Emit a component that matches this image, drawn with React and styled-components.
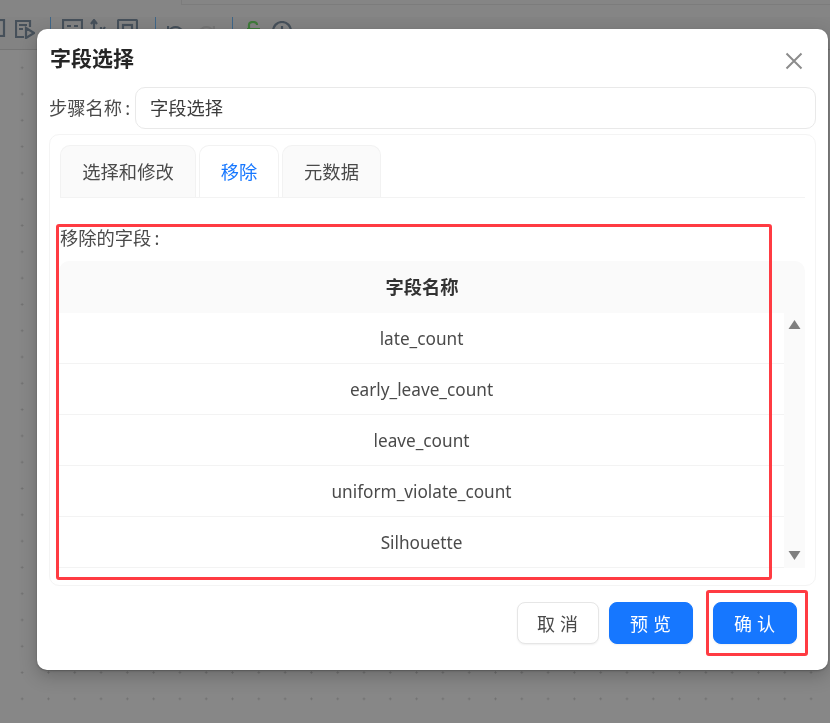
import React from 'react';
import styled, { createGlobalStyle } from 'styled-components';

const GlobalStyle = createGlobalStyle`
  html, body {
    margin: 0;
    padding: 0;
    height: 100%;
    overflow: hidden;
  }
  body {
    font-family: "Noto Sans", "Noto Sans CJK SC", sans-serif;
  }
`;

const Page = styled.div`
  position: relative;
  width: 830px;
  height: 723px;
  overflow: hidden;
  background-color: #878787;
  background-image: radial-gradient(circle, #6f6f6f 0.9px, transparent 1.2px);
  background-size: 26.3px 26.3px;
  background-position: 9px 2px;
  filter: blur(0.55px);
`;

const TopStrip = styled.div`
  height: 17px;
  box-sizing: border-box;
  background: #858585;
`;

const TopField = styled.div`
  width: 649px;
  height: 5px;
  margin-left: 181px;
  box-sizing: border-box;
  border-left: 1px solid #7c7c7c;
  border-bottom: 1px solid #7c7c7c;
`;

const Toolbar = styled.div`
  display: flex;
  align-items: flex-start;
  height: 33px;
  box-sizing: border-box;
  padding-left: 0;
  background: #838383;
  border-bottom: 1px solid #757575;
`;

const ToolIcon = styled.svg`
  flex: none;
  margin-left: ${(p) => p.$gap}px;
  margin-top: ${(p) => p.$top || 2}px;
  fill: none;
  stroke: ${(p) => p.$color || '#46505a'};
  stroke-width: 2.2;
`;

const ToolDivider = styled.span`
  flex: none;
  width: 1px;
  height: 22px;
  margin-left: ${(p) => p.$gap}px;
  background: #3f6688;
`;

const Overlay = styled.div`
  position: absolute;
  inset: 0;
  padding: 29px 2px 0 37px;
`;

const Modal = styled.div`
  position: relative;
  width: 791px;
  height: 641px;
  box-sizing: border-box;
  padding: 13px 12px 0;
  background: #fff;
  border-radius: 10px;
  box-shadow: 0 6px 18px rgba(0, 0, 0, 0.22), 0 1px 2px rgba(0, 0, 0, 0.25);
`;

const ModalHeader = styled.div`
  display: flex;
  align-items: center;
  justify-content: space-between;
  height: 34px;
  padding-left: 1px;
`;

const ModalTitle = styled.h2`
  margin: 0 0 2px;
  font-size: 21px;
  line-height: 32px;
  font-weight: 700;
  color: #262626;
`;

const CloseButton = styled.button`
  display: flex;
  align-items: center;
  justify-content: center;
  width: 22px;
  height: 22px;
  margin-right: 11px;
  margin-top: 3px;
  padding: 0;
  border: none;
  background: none;
  color: #8c8c8c;
`;

const StepRow = styled.div`
  display: flex;
  align-items: center;
  height: 42px;
  margin-top: 11px;
`;

const StepLabel = styled.label`
  width: 86px;
  padding-bottom: 3px;
  font-size: 18.3px;
  color: #4a4a4a;
  white-space: nowrap;
`;

const Colon = styled.span`
  margin-left: 3px;
`;

const StepInput = styled.input`
  width: 681px;
  height: 42px;
  box-sizing: border-box;
  padding: 0 14px 2px;
  border: 1.5px solid #e9e9e9;
  border-radius: 10px;
  outline: none;
  font: inherit;
  font-size: 18.3px;
  color: #3c3c3c;
`;

const Card = styled.div`
  width: 767px;
  height: 452px;
  box-sizing: border-box;
  margin-top: 5px;
  padding: 10px 10px 0;
  border: 1.5px solid #f4f4f4;
  border-radius: 10px;
`;

const TabBar = styled.div`
  display: flex;
  gap: 3px;
  height: 53px;
  box-sizing: border-box;
  border-bottom: 1.5px solid #f3f3f3;
`;

const Tab = styled.div`
  display: flex;
  align-items: center;
  justify-content: center;
  width: ${(p) => p.$width}px;
  height: 52px;
  box-sizing: border-box;
  padding-bottom: 2px;
  border: 1.5px solid #f2f2f2;
  border-bottom: none;
  border-radius: 10px 10px 0 0;
  font-size: 18.3px;
  background: ${(p) => (p.$active ? '#fff' : '#fafafa')};
  color: ${(p) => (p.$active ? '#1677ff' : '#4a4a4a')};
`;

const FieldLabel = styled.div`
  height: 26px;
  margin-top: 27px;
  font-size: 18.3px;
  line-height: 26px;
  color: #4a4a4a;
`;

const Table = styled.div`
  width: 746px;
  margin-top: 10px;
  margin-left: -1px;
`;

const HeadRow = styled.div`
  height: 51.5px;
  display: flex;
  align-items: center;
  padding: 0 20px 2px 0;
  box-sizing: border-box;
  background: #fafafa;
  border-radius: 10px 10px 0 0;
  font-size: 18.3px;
  font-weight: 700;
  color: #333;
  justify-content: center;
`;

const TableBody = styled.div`
  display: flex;
`;

const Rows = styled.div`
  flex: 1;
`;

const Row = styled.div`
  display: flex;
  align-items: center;
  justify-content: center;
  height: 51px;
  box-sizing: border-box;
  padding-top: 2px;
  border-bottom: 1.5px solid #f3f3f3;
  font-size: 17.2px;
  color: #4a4a4a;
`;

const ScrollTrack = styled.div`
  display: flex;
  flex-direction: column;
  align-items: center;
  justify-content: space-between;
  width: 21px;
  height: 255px;
  box-sizing: border-box;
  padding: 7px 0 8px;
  background: #fafafa;
  color: #808080;
`;

const Footer = styled.div`
  display: flex;
  gap: 10px;
  margin-top: 16px;
  padding-left: 468px;
`;

const Button = styled.button`
  width: ${(p) => p.$width}px;
  height: 42px;
  margin-left: ${(p) => p.$gap || 0}px;
  padding: 0;
  border: 1.5px solid ${(p) => (p.$primary ? '#1677ff' : '#e6e6e6')};
  border-radius: 8px;
  background: ${(p) => (p.$primary ? '#1677ff' : '#fff')};
  box-shadow: 0 1px 2px rgba(0, 0, 0, 0.06);
  font: inherit;
  font-size: 18px;
  letter-spacing: 5px;
  text-indent: 4px;
  color: ${(p) => (p.$primary ? '#fff' : '#4a4a4a')};
`;

const Callout = styled.div`
  position: absolute;
  left: ${(p) => p.$left}px;
  top: ${(p) => p.$top}px;
  width: ${(p) => p.$width}px;
  height: ${(p) => p.$height}px;
  box-sizing: border-box;
  border: 3px solid #ff3b42;
  border-radius: 3px;
  pointer-events: none;
`;

const fields = ['late_count', 'early_leave_count', 'leave_count', 'uniform_violate_count', 'Silhouette'];

function App() {
  return (
    <Page>
      <GlobalStyle />
      <TopStrip>
        <TopField />
      </TopStrip>
      <Toolbar>
        <ToolIcon $gap={-14} width="20" height="18" viewBox="0 0 20 18">
          <rect x="1" y="1" width="17" height="16" />
        </ToolIcon>
        <ToolIcon $gap={9} width="20" height="20" viewBox="0 0 20 20">
          <path d="M15 8V2H1v16h8M4 6h8M4 10h4M11 9l8 5-8 5z" />
        </ToolIcon>
        <ToolDivider $gap={15} />
        <ToolIcon $gap={11} width="21" height="14" viewBox="0 0 21 14">
          <rect x="1" y="1" width="19" height="12" />
          <path d="M5 7h4M12 7h4" />
        </ToolIcon>
        <ToolIcon $gap={7} width="16" height="16" viewBox="0 0 16 16">
          <path d="M4 15V2M1 5l3-4 3 4M11 14l4-6M11 8v6" />
        </ToolIcon>
        <ToolIcon $gap={11} width="21" height="20" viewBox="0 0 21 20">
          <rect x="1" y="1" width="19" height="18" rx="1" />
          <rect x="6" y="6" width="9" height="8" />
        </ToolIcon>
        <ToolDivider $gap={17} />
        <ToolIcon $gap={11} $top={7} width="18" height="14" viewBox="0 0 18 14">
          <path d="M2 7c3-5 10-6 14 1M1 2v6h6" />
        </ToolIcon>
        <ToolIcon $gap={12} $top={7} $color="#767676" width="18" height="14" viewBox="0 0 18 14">
          <path d="M16 7C13 2 6 1 2 8M17 2v6h-6" />
        </ToolIcon>
        <ToolDivider $gap={17} />
        <ToolIcon $gap={13} $top={4} $color="#3f7a3a" width="15" height="20" viewBox="0 0 15 20">
          <path d="M3 8V4c0-4 8-4 8 0M1 8h13M1 13h13" />
        </ToolIcon>
        <ToolIcon $gap={11} $top={4} width="20" height="20" viewBox="0 0 20 20">
          <circle cx="10" cy="10" r="9" />
          <path d="M10 5v4" />
        </ToolIcon>
      </Toolbar>

      <Overlay>
        <Modal>
          <ModalHeader>
            <ModalTitle>字段选择</ModalTitle>
            <CloseButton aria-label="关闭">
              <svg width="18" height="18" viewBox="0 0 18 18" fill="none" stroke="currentColor" strokeWidth="2">
                <path d="M1.5 1.5l15 15M16.5 1.5l-15 15" />
              </svg>
            </CloseButton>
          </ModalHeader>
          <StepRow>
            <StepLabel>步骤名称<Colon>:</Colon></StepLabel>
            <StepInput readOnly value="字段选择" />
          </StepRow>
          <Card>
            <TabBar>
              <Tab $width={136}>选择和修改</Tab>
              <Tab $width={80} $active>移除</Tab>
              <Tab $width={99}>元数据</Tab>
            </TabBar>
            <FieldLabel>移除的字段<Colon>:</Colon></FieldLabel>
            <Table>
              <HeadRow>字段名称</HeadRow>
              <TableBody>
                <Rows>
                  {fields.map((name) => (
                    <Row key={name}>{name}</Row>
                  ))}
                </Rows>
                <ScrollTrack>
                  <svg width="13" height="9" viewBox="0 0 13 9" fill="currentColor">
                    <path d="M6.5 0l6 9H.5z" />
                  </svg>
                  <svg width="13" height="9" viewBox="0 0 13 9" fill="currentColor">
                    <path d="M6.5 9l6-9H.5z" />
                  </svg>
                </ScrollTrack>
              </TableBody>
            </Table>
          </Card>
          <Footer>
            <Button $width={82}>取消</Button>
            <Button $width={84} $primary>预览</Button>
            <Button $width={84} $gap={10} $primary>确认</Button>
          </Footer>
          <Callout $left={19} $top={195} $width={716} $height={356} />
          <Callout $left={669} $top={561} $width={102} $height={66} />
        </Modal>
      </Overlay>
    </Page>
  );
}

export default App;
